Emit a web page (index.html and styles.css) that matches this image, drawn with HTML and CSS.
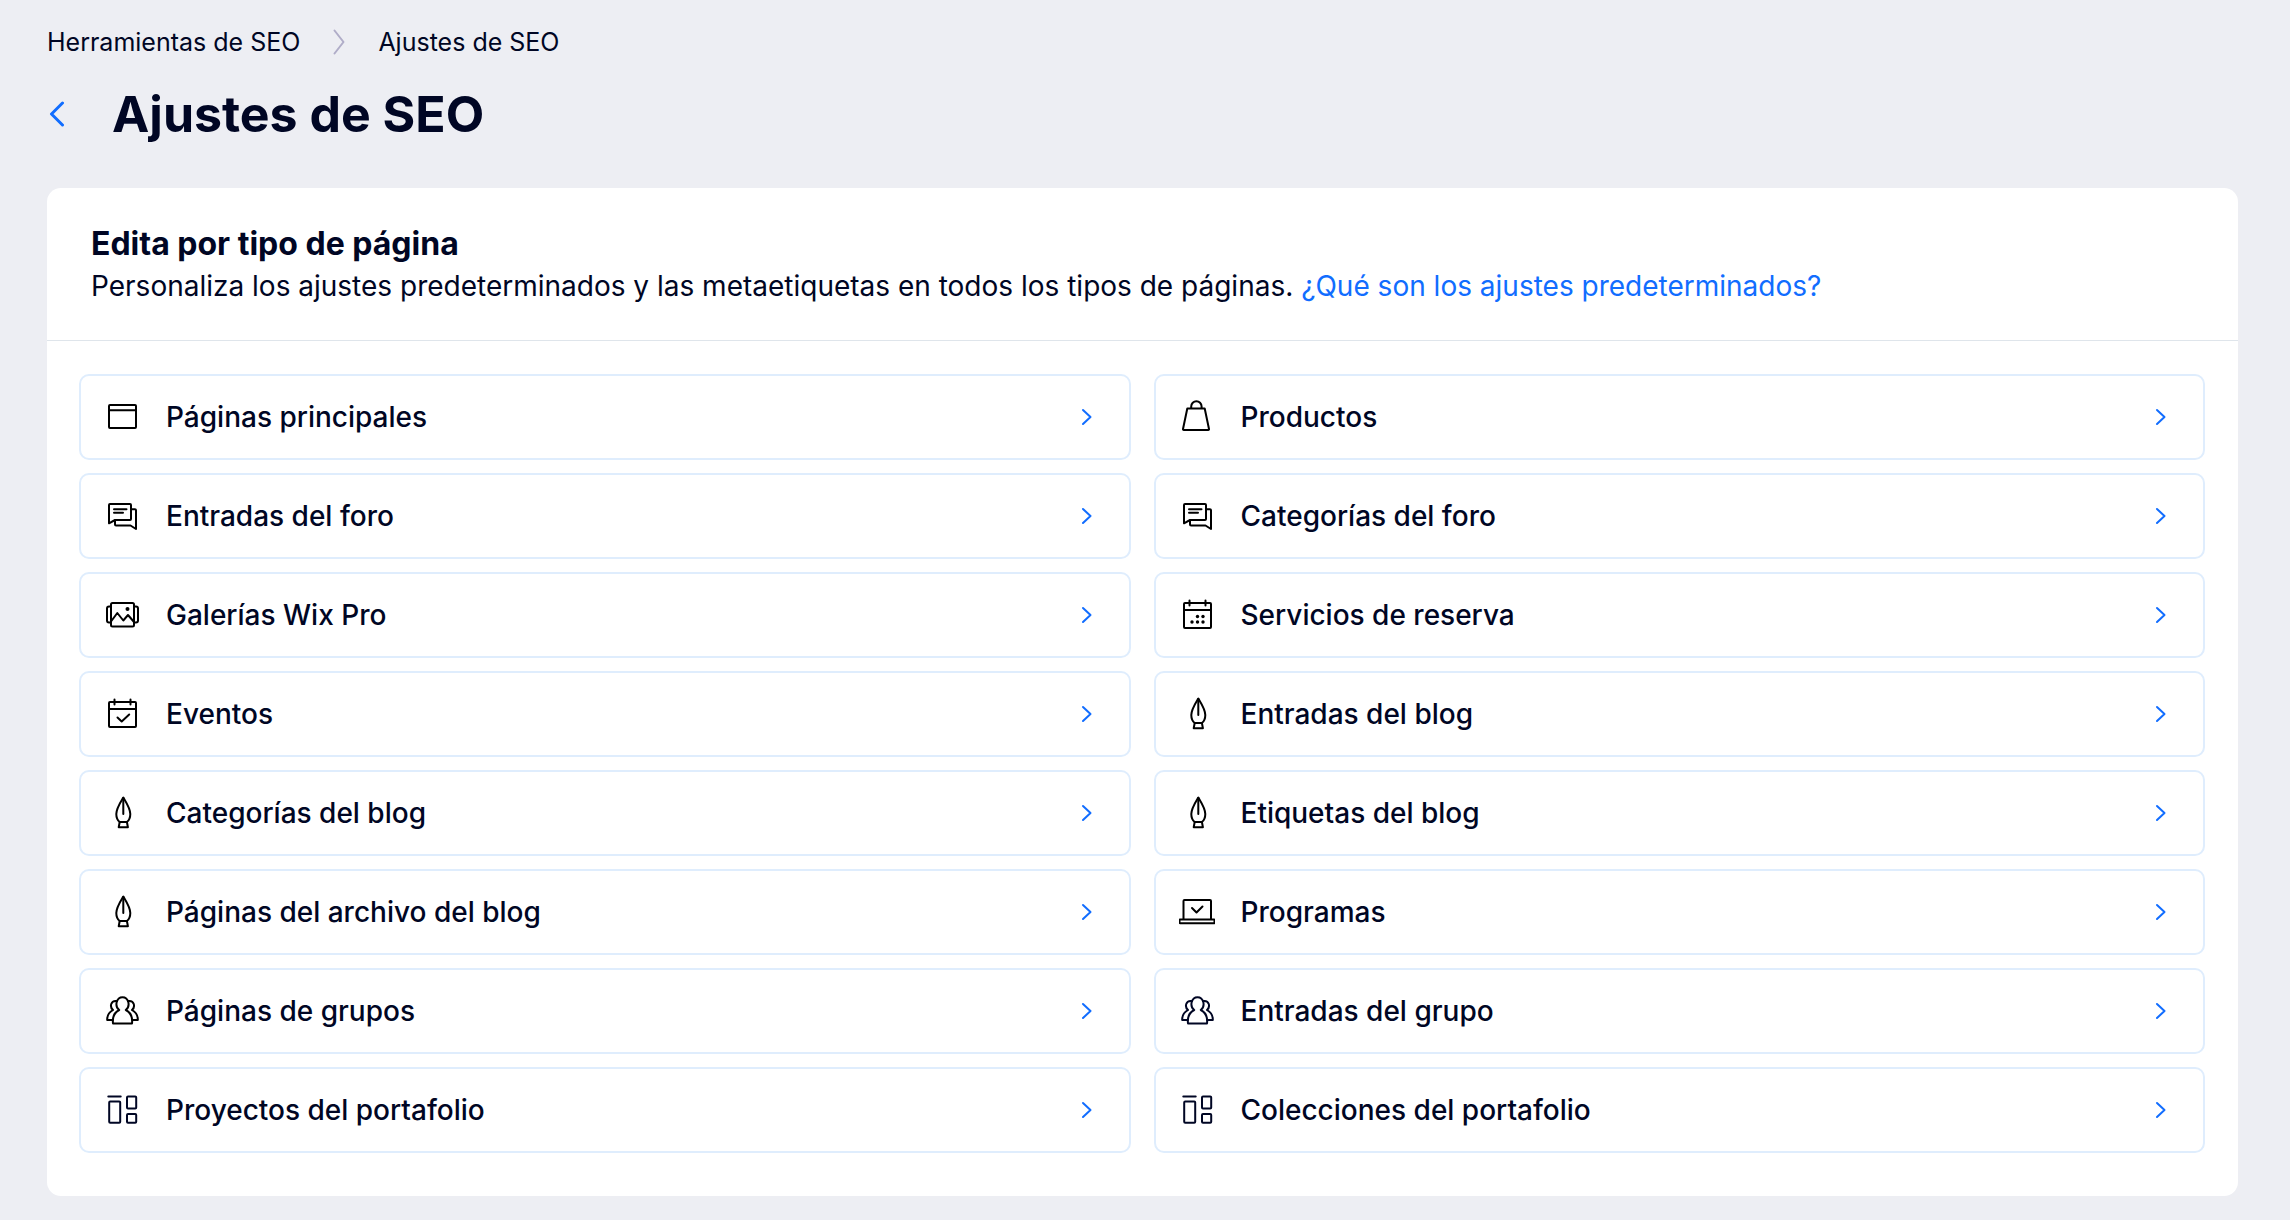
FILE: index.html
```html
<!DOCTYPE html>
<html lang="es">
<head>
    <meta charset="UTF-8">
    <meta name="viewport" content="width=device-width, initial-scale=1">
    <title>Ajustes de SEO</title>
    <link rel="stylesheet" href="styles.css">
</head>
<body>
    <!-- iconos -->
    <svg class="sprite" aria-hidden="true">
        <symbol id="chevron" viewBox="0 0 12 18">
            <path d="M2 2l7.500 7-7.500 7"/>
        </symbol>
        <symbol id="ventana" viewBox="0 0 36 36">
            <rect x="5" y="6" width="27" height="23" rx="1"/>
            <path d="M5 11.300h27"/>
        </symbol>
        <symbol id="bolsa" viewBox="0 0 36 36">
            <path d="M8.300 9.500h17.400l4.300 20.500q.2 1-.8 1h-24.400q-1 0-.8-1z"/>
            <path d="M12.200 9v-1.500a5.200 5.300 0 0 1 10.400 0v1.500"/>
        </symbol>
        <symbol id="foro" viewBox="0 0 36 36">
            <path d="M5 25.300v-18.300q0-1 1-1h20q1 0 1 1v14q0 1-1 1h-15z"/>
            <path d="M10 11.300h12.500M10 14.700h9M27.500 11.300h3.500q1 0 1 1v18.700l-5.500-3.500h-14.500q-1 0-1-1v-4"/>
        </symbol>
        <symbol id="galeria" viewBox="0 0 36 36">
            <rect x="7" y="6" width="23" height="23.500" rx="1.500"/>
            <path d="M7 9.500h-2q-2 0-2 2v12q0 2 2 2h2M30 9.500h2q2 0 2 2v12q0 2-2 2h-2M7 24.500l6.300-8.500 6 7.500 4.700-5.500 6 7"/>
            <circle class="relleno" cx="23.500" cy="12" r="2"/>
        </symbol>
        <symbol id="calendario" viewBox="0 0 36 36">
            <rect x="5" y="6" width="27" height="25" rx="1"/>
            <path d="M5 13h27M10.500 3.500v5M26.500 3.500v5"/>
            <g class="relleno">
                <circle cx="18.500" cy="19.500" r="1.700"/>
                <circle cx="24" cy="19.500" r="1.700"/>
                <circle cx="13" cy="25" r="1.700"/>
                <circle cx="18.500" cy="25" r="1.700"/>
                <circle cx="24" cy="25" r="1.700"/>
            </g>
        </symbol>
        <symbol id="evento" viewBox="0 0 36 36">
            <rect x="5" y="6" width="27" height="25" rx="1"/>
            <path d="M5 13h27M10.500 3.500v5M26.500 3.500v5M13.500 21.500l4.200 4 7.500-7"/>
        </symbol>
        <symbol id="pluma" viewBox="0 0 36 36">
            <path d="M19.300 2.500c-3 5-7 11-7 16.500 0 4 1.700 6.700 3.400 8h7.200c1.700-1.300 3.400-4 3.400-8 0-5.500-4-11.500-7-16.500z"/>
            <path d="M19.300 3v16M15.700 27l-1 5.200h9.200l-1-5.200"/>
        </symbol>
        <symbol id="programa" viewBox="0 0 36 36">
            <path d="M4.500 25v-18q0-1 1-1h25.500q1 0 1 1v18M13 14l4.500 4.500 6-6"/>
            <rect x="0.500" y="25.500" width="35" height="3.700" rx="0.500"/>
        </symbol>
        <symbol id="grupo" viewBox="0 0 36 36">
            <path d="M9 30.500c-.8-6.500 1-10.800 6.200-13.500-5-4-2.700-12.800 3.300-12.800s8.300 8.800 3.300 12.800c5.200 2.700 7 7 6.200 13.500z"/>
            <path d="M13 8c-6.500-1-7.500 6-4 9-4.500 2.500-6 5.500-5.800 10h5.500M24 8c6.500-1 7.500 6 4 9 4.500 2.500 6 5.500 5.800 10h-5.500"/>
        </symbol>
        <symbol id="portafolio" viewBox="0 0 36 36">
            <path d="M4.300 4.500h12.400"/>
            <rect x="5.200" y="9.500" width="11" height="21.300" rx="1"/>
            <rect x="23" y="4.500" width="9.200" height="12" rx="1"/>
            <rect x="23" y="22" width="9.200" height="8.800" rx="1"/>
        </symbol>
    </svg>

    <header class="cabecera">
        <nav class="migas" aria-label="Ruta">
            <a href="#">Herramientas de SEO</a>
            <svg class="separador" viewBox="0 0 12 26"><path d="M1.500 1.500l9 11.500-9 11.500"/></svg>
            <a href="#">Ajustes de SEO</a>
        </nav>
        <div class="titulo">
            <button class="volver" type="button" aria-label="Volver">
                <svg viewBox="0 0 16 26"><path d="M13.500 2l-11 11 11 11"/></svg>
            </button>
            <h1>Ajustes de SEO</h1>
        </div>
    </header>

    <main class="tarjeta">
        <div class="intro">
            <h2>Edita por tipo de página</h2>
            <p>Personaliza los ajustes predeterminados y las metaetiquetas en todos los tipos de páginas. <a href="#">¿Qué son los ajustes predeterminados?</a></p>
        </div>
        <div class="lista">
            <a class="tipo" href="#"><svg class="icono"><use href="#ventana"/></svg><span>Páginas principales</span><svg class="flecha"><use href="#chevron"/></svg></a>
            <a class="tipo" href="#"><svg class="icono"><use href="#bolsa"/></svg><span>Productos</span><svg class="flecha"><use href="#chevron"/></svg></a>
            <a class="tipo" href="#"><svg class="icono"><use href="#foro"/></svg><span>Entradas del foro</span><svg class="flecha"><use href="#chevron"/></svg></a>
            <a class="tipo" href="#"><svg class="icono"><use href="#foro"/></svg><span>Categorías del foro</span><svg class="flecha"><use href="#chevron"/></svg></a>
            <a class="tipo" href="#"><svg class="icono"><use href="#galeria"/></svg><span>Galerías Wix Pro</span><svg class="flecha"><use href="#chevron"/></svg></a>
            <a class="tipo" href="#"><svg class="icono"><use href="#calendario"/></svg><span>Servicios de reserva</span><svg class="flecha"><use href="#chevron"/></svg></a>
            <a class="tipo" href="#"><svg class="icono"><use href="#evento"/></svg><span>Eventos</span><svg class="flecha"><use href="#chevron"/></svg></a>
            <a class="tipo" href="#"><svg class="icono"><use href="#pluma"/></svg><span>Entradas del blog</span><svg class="flecha"><use href="#chevron"/></svg></a>
            <a class="tipo" href="#"><svg class="icono"><use href="#pluma"/></svg><span>Categorías del blog</span><svg class="flecha"><use href="#chevron"/></svg></a>
            <a class="tipo" href="#"><svg class="icono"><use href="#pluma"/></svg><span>Etiquetas del blog</span><svg class="flecha"><use href="#chevron"/></svg></a>
            <a class="tipo" href="#"><svg class="icono"><use href="#pluma"/></svg><span>Páginas del archivo del blog</span><svg class="flecha"><use href="#chevron"/></svg></a>
            <a class="tipo" href="#"><svg class="icono"><use href="#programa"/></svg><span>Programas</span><svg class="flecha"><use href="#chevron"/></svg></a>
            <a class="tipo" href="#"><svg class="icono"><use href="#grupo"/></svg><span>Páginas de grupos</span><svg class="flecha"><use href="#chevron"/></svg></a>
            <a class="tipo" href="#"><svg class="icono azul"><use href="#grupo"/></svg><span>Entradas del grupo</span><svg class="flecha"><use href="#chevron"/></svg></a>
            <a class="tipo" href="#"><svg class="icono azul"><use href="#portafolio"/></svg><span>Proyectos del portafolio</span><svg class="flecha"><use href="#chevron"/></svg></a>
            <a class="tipo" href="#"><svg class="icono azul"><use href="#portafolio"/></svg><span>Colecciones del portafolio</span><svg class="flecha"><use href="#chevron"/></svg></a>
        </div>
    </main>
</body>
</html>
```

FILE: styles.css
```css
* {
    box-sizing: border-box;
}
body {
    margin: 0;
    padding: 24px 52px 24px 47px;
    background-color: #edeef3;
    color: #000624;
    font-family: Inter, "Liberation Sans", sans-serif;
}
h1, h2, p {
    margin: 0;
}
a {
    color: inherit;
    text-decoration: none;
}
svg {
    flex: none;
    fill: none;
    stroke: currentColor;
    stroke-width: 2;
    stroke-linecap: round;
    stroke-linejoin: round;
}
.sprite {
    display: none;
}

/* cabecera */
.migas {
    display: flex;
    align-items: center;
    gap: 33px;
    font-size: 25px;
    line-height: 36px;
}
.separador {
    width: 12px;
    height: 26px;
    color: #b0adc8;
}
.titulo {
    display: flex;
    align-items: center;
    gap: 47px;
    margin-top: 24px;
}
.titulo h1 {
    font-size: 50px;
    font-weight: 700;
    line-height: 60px;
}
.volver {
    display: flex;
    padding: 0 0 0 2px;
    border: 0;
    background: none;
    color: #116dff;
    cursor: pointer;
}
.volver svg {
    width: 16px;
    height: 26px;
    stroke-width: 3;
}

/* tarjeta */
.tarjeta {
    margin-top: 44px;
    background-color: white;
    border-radius: 14px;
}
.intro {
    padding: 35px 44px 33px;
    border-bottom: 1px solid #dfe5eb;
}
.intro h2 {
    font-size: 32px;
    font-weight: 700;
    line-height: 42px;
}
.intro p {
    font-size: 28px;
    line-height: 42px;
}
.intro p a {
    color: #116dff;
}
.lista {
    display: grid;
    grid-template-columns: 1fr 1fr;
    gap: 13px 23px;
    padding: 33px 33px 43px 32px;
}
.tipo {
    display: flex;
    align-items: center;
    height: 86px;
    padding: 0 36px 0 23px;
    border: 2px solid #dfedfd;
    border-radius: 10px;
    font-size: 28px;
    font-weight: 500;
}
.tipo:hover {
    background-color: #f4f9ff;
}
.tipo span {
    flex: 1;
    margin-left: 26px;
}
.icono {
    width: 36px;
    height: 36px;
    color: black;
    overflow: visible;
}
.azul {
    color: #000624;
}
.relleno {
    fill: currentColor;
    stroke: none;
}
.flecha {
    width: 12px;
    height: 18px;
    color: #116dff;
}
```
